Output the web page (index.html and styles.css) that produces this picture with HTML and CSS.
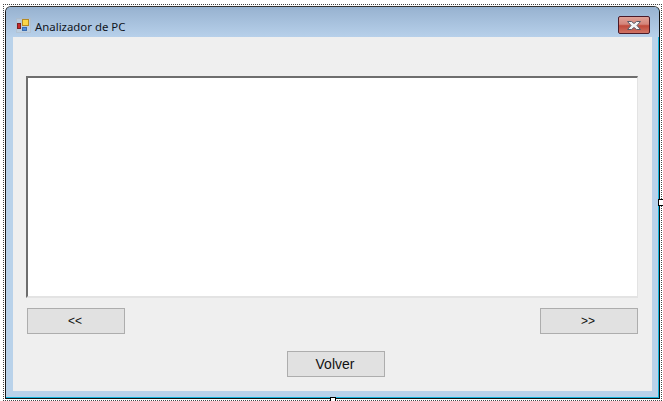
FILE: index.html
```html
<!DOCTYPE html>
<html lang="es">
<head>
<meta charset="utf-8">
<title>Analizador de PC</title>
<link rel="stylesheet" href="styles.css">
</head>
<body>
<div class="designer">
  <div class="window">
    <div class="titlebar">
      <svg class="app-icon" width="15" height="15" viewBox="0 0 15 15">
        <rect x="0.5" y="0.5" width="14" height="14" fill="#c9d3dc" opacity="0.5" stroke="#b5bcc2"/>
        <rect x="1.5" y="5.5" width="3" height="5" fill="#c8282c" stroke="#7c2020"/>
        <rect x="6.5" y="1.500" width="6" height="6" fill="#fbd648" stroke="#b58a22"/>
        <rect x="6.5" y="9.5" width="4" height="3" fill="#4f8fe0" stroke="#3a6cb0"/>
      </svg>
      <span class="title">Analizador de PC</span>
      <div class="close">
        <svg width="16" height="11" viewBox="0 0 16 11">
          <path d="M1.500 1.500h4l2.500 2 2.500-2h4l-3.500 4 3.500 4h-4l-2.500-2-2.500 2h-4l3.500-4z" fill="#f2f3f6" stroke="#5a5a68" stroke-width="1"/>
        </svg>
      </div>
    </div>
    <div class="client">
      <div class="textbox"></div>
      <div class="nav-row">
        <button class="btn nav-btn">&lt;&lt;</button>
        <button class="btn nav-btn">&gt;&gt;</button>
      </div>
      <div class="back-row">
        <button class="btn back-btn">Volver</button>
      </div>
    </div>
  </div>
  <span class="handle handle-right"></span>
  <span class="handle handle-bottom"></span>
</div>
</body>
</html>
```

FILE: styles.css
```css
* { box-sizing: border-box; }
html, body { margin: 0; padding: 0; background: #fff; }
body { width: 663px; height: 401px; overflow: hidden; font-family: "Liberation Sans", Arial, sans-serif; }

.designer {
  position: relative;
  width: 659px;
  height: 397px;
  margin: 4px 0 0 3px;
  border: 1px dotted #444;
  padding: 1px 1px 0 1px;
}
.window {
  width: 655px;
  height: 393px;
  border-left: 1px solid #1a1a1a;
  border-top: 1px solid #333;
  border-right: 1px solid #111;
  border-bottom: 1px solid #111;
  border-radius: 6px 6px 0 0;
  background: #b9d2ea;
  box-shadow: inset -1px -1px 0 #12b4dc;
  padding: 0 7px 7px 7px;
  display: flex;
  flex-direction: column;
}
.titlebar {
  height: 30px;
  margin: 0 -7px;
  padding: 8px 9px 0 10px;
  display: flex;
  align-items: center;
  background: linear-gradient(#97b2d0, #b7d0ea);
  border-radius: 5px 5px 0 0;
}
.app-icon { flex: none; margin-top: -2px; }
.title {
  margin-left: 4px;
  font-family: "Noto Sans", "Open Sans", sans-serif;
  font-size: 11.4px;
  color: #10141c;
  flex: 1;
}
.close {
  width: 32px;
  height: 18px;
  border: 1px solid #4a1a28;
  border-radius: 2px;
  background: linear-gradient(#e0a297 0%, #d4847a 45%, #c0493a 55%, #d07466 100%);
  display: flex;
  align-items: center;
  justify-content: center;
  margin-top: -2px;
}
.close svg { display: block; }

.client {
  flex: 1;
  background: #efefef;
  padding: 39px 14px 0 13px;
  display: flex;
  flex-direction: column;
}
.textbox {
  height: 222px;
  background: #fff;
  border-top: 2px solid #6e6e6e;
  border-left: 2px solid #6e6e6e;
  border-right: 1px solid #e3e3e3;
  border-bottom: 2px solid #e3e3e3;
}
.nav-row {
  margin-top: 10px;
  padding-left: 1px;
  display: flex;
  justify-content: space-between;
}
.back-row {
  margin-top: 17px;
  padding-left: 8px;
  display: flex;
  justify-content: center;
}
.btn {
  width: 98px;
  height: 26px;
  padding: 0 2px 0 0;
  background: #e1e1e1;
  border: 1px solid #adadad;
  border-radius: 0;
  font-family: "Liberation Sans", Arial, sans-serif;
  color: #111;
}
.nav-btn { font-size: 12px; }
.back-btn { font-size: 14px; }

.handle {
  position: absolute;
  background: #fff;
  border: 1px solid #000;
}
.handle-right { left: 654px; top: 194px; width: 8px; height: 7px; }
.handle-bottom { left: 326px; top: 392px; width: 6px; height: 8px; }
```
